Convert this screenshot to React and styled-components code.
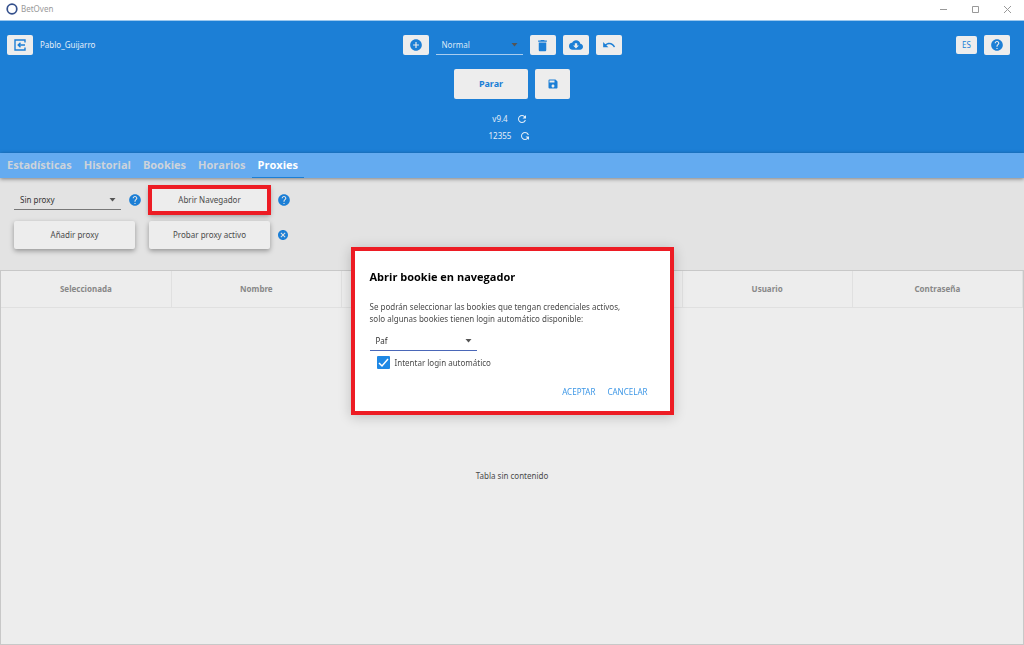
import React, { useState } from "react";
import styled, { createGlobalStyle, css } from "styled-components";
import {
  MdAddCircle,
  MdDelete,
  MdCloudDownload,
  MdUndo,
  MdSave,
  MdRefresh,
  MdHelp,
  MdCancel,
} from "react-icons/md";

const BLUE = "#1c7fd6";
const RED = "#ed1c24";

const GlobalStyle = createGlobalStyle`
  *, *::before, *::after { box-sizing: border-box; }
  body { margin: 0; background: #ededed; }
  body, button, select, input {
    font-family: "Noto Sans", "Open Sans", sans-serif;
    font-size: 8px;
    line-height: 12px;
    color: #4a4a4a;
  }
  button { padding: 0; border: 0; background: none; cursor: pointer; }
  svg { display: block; flex: none; }
`;

const Window = styled.div`
  display: flex;
  flex-direction: column;
  min-height: 100vh;
`;

const TitleBar = styled.header`
  display: flex;
  align-items: center;
  gap: 3px;
  height: 21px;
  padding: 0 12px 2px 6px;
  background: #fff;
  border-bottom: 1px solid #9cc8ee;
  color: #999;
`;

const AppName = styled.span`
  flex: 1;
`;

const WindowControls = styled.div`
  display: flex;
  gap: 23px;
`;

const WindowButton = styled.button`
  color: #999;
`;

const TopBar = styled.section`
  display: grid;
  grid-template-columns: 1fr auto 1fr;
  align-items: start;
  min-height: 132px;
  padding: 14px 14px 9px 7px;
  background: ${BLUE};
  color: #e4eef8;
`;

const UserArea = styled.div`
  display: flex;
  align-items: center;
  gap: 7px;
`;

const CenterArea = styled.div`
  display: flex;
  flex-direction: column;
  align-items: center;
  padding-left: 7px;
`;

const RightArea = styled.div`
  display: flex;
  justify-content: flex-end;
  align-items: center;
  gap: 7px;
`;

const Line = styled.div`
  display: flex;
  align-items: center;
  gap: 7px;
`;

const IconButton = styled.button`
  display: flex;
  align-items: center;
  justify-content: center;
  width: ${(p) => p.$width || 26}px;
  height: ${(p) => p.$height || 20}px;
  border-radius: 2px;
  background: #ededed;
  color: ${BLUE};
`;

const MainActions = styled(Line)`
  margin: 14px 0 11px;
`;

const StopButton = styled(IconButton)`
  font-size: 9px;
  font-weight: 700;
`;

const VersionLine = styled.div`
  display: flex;
  align-items: center;
  gap: 8px;
  height: 17px;
  padding-right: 4px;
`;

const FlippedRefresh = styled(MdRefresh)`
  transform: scaleY(-1);
`;

const SelectBox = styled.div`
  display: flex;
  align-items: center;
  position: relative;
  width: ${(p) => p.$width}px;
  height: 20px;
  border-bottom: 1px solid ${(p) => p.$line};

  svg {
    position: absolute;
    right: 5px;
    pointer-events: none;
  }
`;

const Select = styled.select`
  appearance: none;
  width: 100%;
  padding: 0 14px 0 6px;
  border: 0;
  outline: 0;
  background: transparent;
  color: ${(p) => p.$color || "#333"};
`;

const Tabs = styled.nav`
  display: flex;
  position: relative;
  height: 25px;
  padding-left: 1px;
  background: #64abf0;
  box-shadow: 0 1px 4px rgba(0, 0, 0, 0.45);
`;

const Tab = styled.button`
  padding: 0 6px;
  border-bottom: 1px solid transparent;
  font-family: "Open Sans", sans-serif;
  font-size: 11px;
  font-weight: 700;
  color: #cdd3da;

  ${(p) =>
    p.$active &&
    css`
      border-color: ${BLUE};
      color: #fff;
    `}
`;

const ProxyTools = styled.section`
  display: flex;
  flex-direction: column;
  gap: 7px;
  padding: 8px 14px 21px;
  background: #e3e3e3;
`;

const ToolRow = styled.div`
  display: flex;
  align-items: center;
  gap: ${(p) => p.$gap}px;
`;

const Hint = styled.button`
  color: ${BLUE};
`;

const ActionPair = styled.div`
  display: flex;
  align-items: center;
  gap: 7px;
`;

const RaisedButton = styled.button`
  width: 121px;
  height: 28px;
  border-radius: 2px;
  background: #ededed;
  box-shadow: 0 2px 5px rgba(0, 0, 0, 0.35);

  ${(p) =>
    p.$marked &&
    css`
      border-radius: 0;
      outline: 4px solid ${RED};
      outline-offset: -3px;
    `}
`;

const TablePanel = styled.section`
  display: flex;
  flex-direction: column;
  flex: 1;
  border: 1px solid #c8c8c8;
  background: #ededed;
`;

const Table = styled.table`
  width: 100%;
  border-collapse: collapse;
  table-layout: fixed;
`;

const HeadCell = styled.th`
  height: 36px;
  padding: 0;
  border-right: 1px solid #e0e0e0;
  border-bottom: 1px solid #e0e0e0;
  font-weight: 700;
  color: #888;
`;

const EmptyMessage = styled.p`
  display: flex;
  flex: 1;
  align-items: center;
  justify-content: center;
  margin: 0;
`;

const Overlay = styled.div`
  position: fixed;
  inset: 20px 0 0;
  display: flex;
  align-items: center;
  justify-content: center;
  padding-bottom: 3px;
`;

const Dialog = styled.div`
  width: 323px;
  padding: 18px 15px 13px;
  border: 4px solid ${RED};
  background: #fff;
  box-shadow: 0 2px 12px rgba(0, 0, 0, 0.2);
`;

const DialogTitle = styled.h2`
  margin: 0 0 16px;
  font-family: "Open Sans", sans-serif;
  font-size: 11px;
  line-height: 16px;
  color: #000;
`;

const DialogText = styled.p`
  margin: 0 0 6px;
`;

const CheckLabel = styled.label`
  display: flex;
  align-items: center;
  gap: 5px;
  margin: 5px 0 0 7px;
`;

const Checkbox = styled.input`
  appearance: none;
  width: 13px;
  height: 13px;
  margin: 0;
  border-radius: 1px;
  background: #1e88e5
    url("data:image/svg+xml,%3Csvg xmlns='http://www.w3.org/2000/svg' viewBox='0 0 13 13'%3E%3Cpath d='M2 7l3 3 6-7' fill='none' stroke='white' stroke-width='1.5'/%3E%3C/svg%3E");
`;

const DialogActions = styled.div`
  display: flex;
  justify-content: flex-end;
  gap: 12px;
  margin-top: 17px;
  padding-right: 7px;
`;

const DialogButton = styled.button`
  color: #3d97e6;
`;

const Caret = ({ color = "#555" }) => (
  <svg width="7" height="4" viewBox="0 0 7 4" aria-hidden="true">
    <path d="M0.5 0h6L3.5 3.5z" fill={color} />
  </svg>
);

const Logo = () => (
  <svg width="12" height="12" viewBox="0 0 12 12" aria-hidden="true">
    <circle cx="6" cy="6" r="4.8" fill="none" stroke="#34508c" strokeWidth="1.7" />
  </svg>
);

const ExitIcon = () => (
  <svg width="12" height="12" viewBox="0 0 12 12" fill="none" stroke="currentColor" strokeWidth="1.4" aria-hidden="true">
    <path d="M11 3.5V1H1v10h10V8.500M11 6H4.500M6.500 3.700L4.200 6l2.300 2.300" />
  </svg>
);

const tabs = ["Estadísticas", "Historial", "Bookies", "Horarios", "Proxies"];
const columns = ["Seleccionada", "Nombre", "", "", "Usuario", "Contraseña"];

export default function App() {
  const [tab, setTab] = useState("Proxies");

  return (
    <>
      <GlobalStyle />
      <Window>
        <TitleBar>
          <Logo />
          <AppName>BetOven</AppName>
          <WindowControls>
            <WindowButton aria-label="Minimizar">
              <svg width="9" height="9" viewBox="0 0 9 9" stroke="currentColor">
                <path d="M1 4.500h7" />
              </svg>
            </WindowButton>
            <WindowButton aria-label="Maximizar">
              <svg width="9" height="9" viewBox="0 0 9 9" fill="none" stroke="currentColor">
                <path d="M1.500 1.500h6v6h-6z" />
              </svg>
            </WindowButton>
            <WindowButton aria-label="Cerrar">
              <svg width="9" height="9" viewBox="0 0 9 9" stroke="currentColor">
                <path d="M1 1l7 7M8 1L1 8" />
              </svg>
            </WindowButton>
          </WindowControls>
        </TitleBar>

        <TopBar>
          <UserArea>
            <IconButton aria-label="Salir">
              <ExitIcon />
            </IconButton>
            <span>Pablo_Guijarro</span>
          </UserArea>
          <CenterArea>
            <Line>
              <IconButton aria-label="Añadir"><MdAddCircle size={14} /></IconButton>
              <SelectBox $width={87} $line="#a9cdef">
                <Select $color="#dce9f6" aria-label="Modo">
                  <option>Normal</option>
                </Select>
                <Caret />
              </SelectBox>
              <IconButton aria-label="Eliminar"><MdDelete size={15} /></IconButton>
              <IconButton aria-label="Descargar"><MdCloudDownload size={14} /></IconButton>
              <IconButton aria-label="Deshacer"><MdUndo size={14} /></IconButton>
            </Line>
            <MainActions>
              <StopButton $width={74} $height={30}>Parar</StopButton>
              <IconButton $width={35} $height={30} aria-label="Guardar"><MdSave size={12} /></IconButton>
            </MainActions>
            <VersionLine>v9.4 <MdRefresh size={12} /></VersionLine>
            <VersionLine>12355 <FlippedRefresh size={12} /></VersionLine>
          </CenterArea>
          <RightArea>
            <IconButton $width={21} $height={18}>ES</IconButton>
            <IconButton aria-label="Ayuda"><MdHelp size={14} /></IconButton>
          </RightArea>
        </TopBar>

        <Tabs>
          {tabs.map((t) => (
            <Tab key={t} $active={t === tab} onClick={() => setTab(t)}>{t}</Tab>
          ))}
        </Tabs>

        <ProxyTools>
          <ToolRow $gap={7}>
            <SelectBox $width={107} $line="#777">
              <Select aria-label="Proxy">
                <option>Sin proxy</option>
              </Select>
              <Caret />
            </SelectBox>
            <Hint aria-label="Ayuda sobre el proxy"><MdHelp size={14} /></Hint>
            <ActionPair>
              <RaisedButton $marked>Abrir Navegador</RaisedButton>
              <Hint aria-label="Ayuda sobre el navegador"><MdHelp size={14} /></Hint>
            </ActionPair>
          </ToolRow>
          <ToolRow $gap={14}>
            <RaisedButton>Añadir proxy</RaisedButton>
            <ActionPair>
              <RaisedButton>Probar proxy activo</RaisedButton>
              <Hint aria-label="Cancelar prueba"><MdCancel size={12} /></Hint>
            </ActionPair>
          </ToolRow>
        </ProxyTools>

        <TablePanel>
          <Table>
            <thead>
              <tr>
                {columns.map((c, i) => (
                  <HeadCell key={i} scope="col">{c}</HeadCell>
                ))}
              </tr>
            </thead>
          </Table>
          <EmptyMessage>Tabla sin contenido</EmptyMessage>
        </TablePanel>
      </Window>

      <Overlay>
        <Dialog role="dialog" aria-labelledby="dialog-title">
          <DialogTitle id="dialog-title">Abrir bookie en navegador</DialogTitle>
          <DialogText>
            Se podrán seleccionar las bookies que tengan credenciales activos,
            <br />
            solo algunas bookies tienen login automático disponible:
          </DialogText>
          <SelectBox $width={107} $line="#4a67b8">
            <Select aria-label="Bookie">
              <option>Paf</option>
            </Select>
            <Caret />
          </SelectBox>
          <CheckLabel>
            <Checkbox type="checkbox" defaultChecked />
            Intentar login automático
          </CheckLabel>
          <DialogActions>
            <DialogButton>ACEPTAR</DialogButton>
            <DialogButton>CANCELAR</DialogButton>
          </DialogActions>
        </Dialog>
      </Overlay>
    </>
  );
}
